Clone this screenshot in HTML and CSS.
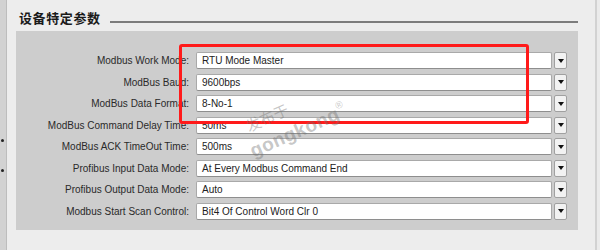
FILE: index.html
```html
<!DOCTYPE html>
<html lang="zh-CN">
<head>
    <meta charset="UTF-8">
    <title>设备特定参数</title>
    <link rel="stylesheet" href="styles.css">
</head>
<body>
    <div class="frame">
        <div class="side-strip">
            <span class="dot dot-1"></span>
            <span class="dot dot-2"></span>
        </div>

        <div class="content">
            <div class="section-title">
                <span class="title-text">设备特定参数</span>
                <span class="title-line"></span>
            </div>

            <div class="panel">
                <div class="param-row">
                    <label class="param-label">Modbus Work Mode:</label>
                    <div class="param-box">RTU Mode Master</div>
                    <div class="drop-btn"><span class="arrow"></span></div>
                </div>
                <div class="param-row">
                    <label class="param-label">ModBus Baud:</label>
                    <div class="param-box">9600bps</div>
                    <div class="drop-btn"><span class="arrow"></span></div>
                </div>
                <div class="param-row">
                    <label class="param-label">ModBus Data Format:</label>
                    <div class="param-box">8-No-1</div>
                    <div class="drop-btn"><span class="arrow"></span></div>
                </div>
                <div class="param-row">
                    <label class="param-label">ModBus Command Delay Time:</label>
                    <div class="param-box">50ms</div>
                    <div class="drop-btn"><span class="arrow"></span></div>
                </div>
                <div class="param-row">
                    <label class="param-label">ModBus ACK TimeOut Time:</label>
                    <div class="param-box">500ms</div>
                    <div class="drop-btn"><span class="arrow"></span></div>
                </div>
                <div class="param-row">
                    <label class="param-label">Profibus Input Data Mode:</label>
                    <div class="param-box">At Every Modbus Command End</div>
                    <div class="drop-btn"><span class="arrow"></span></div>
                </div>
                <div class="param-row">
                    <label class="param-label">Profibus Output Data Mode:</label>
                    <div class="param-box">Auto</div>
                    <div class="drop-btn"><span class="arrow"></span></div>
                </div>
                <div class="param-row">
                    <label class="param-label">Modbus Start Scan Control:</label>
                    <div class="param-box">Bit4 Of Control Word Clr 0</div>
                    <div class="drop-btn"><span class="arrow"></span></div>
                </div>

                <!-- highlight box drawn over the first three rows -->
                <div class="highlight"></div>
            </div>
        </div>
    </div>

    <div class="watermark">
        <span class="wm-cn">发布于</span>
        <span class="wm-en">gongkong<sup>®</sup></span>
    </div>
</body>
</html>
```

FILE: styles.css
```css
* {
    margin: 0;
    padding: 0;
    box-sizing: border-box;
}

body {
    width: 600px;
    height: 250px;
    overflow: hidden;
    background-color: #ebebeb;
    font-family: 'Liberation Sans', Arial, sans-serif;
    position: relative;
}

.frame {
    display: flex;
    height: 250px;
}

.side-strip {
    width: 7px;
    background-color: #d2d2d2;
    border-right: 1px solid #bdbdbd;
    position: relative;
}

.dot {
    position: absolute;
    left: 1px;
    width: 3px;
    height: 3px;
    border-radius: 50%;
    background-color: #222;
}

.dot-1 {
    top: 139px;
}

.dot-2 {
    top: 169px;
}

.content {
    flex: 1;
    padding: 0 17px 0 9px;
    border-right: 2px solid #d2d2d2;
    margin-right: 3px;
    background-color: #ededed;
}

.section-title {
    height: 31px;
    display: flex;
    align-items: flex-start;
    padding-left: 3px;
}

.title-text {
    font-family: 'Noto Sans CJK SC', sans-serif;
    font-weight: bold;
    font-size: 13px;
    letter-spacing: 0.6px;
    color: #1a1a1a;
    line-height: 14px;
    margin-top: 11px;
}

.title-line {
    flex: 1;
    height: 2px;
    background-color: #7c7c7c;
    margin-top: 21px;
    margin-left: 9px;
}

.panel {
    position: relative;
    height: 199px;
    background-color: #cdcdcd;
    padding: 21px 11px 0 0;
    display: flex;
    flex-direction: column;
    gap: 4.5px;
}

.param-row {
    display: flex;
    align-items: center;
    height: 17px;
}

.param-label {
    width: 173px;
    text-align: right;
    font-size: 10px;
    color: #2a2a2a;
}

.param-box {
    flex: 1;
    height: 17px;
    margin-left: 7px;
    background-color: #fff;
    border: 1px solid #a9a9a9;
    border-bottom-color: #8e8e8e;
    border-radius: 2px;
    font-size: 10px;
    color: #222;
    line-height: 15px;
    padding-left: 5px;
}

.drop-btn {
    width: 13px;
    height: 17px;
    margin-left: 2px;
    background-color: #f2f2f2;
    border: 1px solid #a0a0a0;
    border-radius: 2px;
    display: flex;
    align-items: center;
    justify-content: center;
}

.arrow {
    width: 0;
    height: 0;
    border-left: 3px solid transparent;
    border-right: 3px solid transparent;
    border-top: 4px solid #111;
}

.highlight {
    position: absolute;
    left: 163px;
    top: 13px;
    width: 350px;
    height: 80px;
    border: 3px solid #ff1a1a;
    border-radius: 3px;
}

.watermark {
    position: absolute;
    left: 242px;
    top: 99px;
    transform: rotate(-24deg);
    transform-origin: center;
    color: rgba(110, 110, 110, 0.4);
    display: flex;
    flex-direction: column;
    align-items: flex-start;
    pointer-events: none;
}

.wm-cn {
    font-family: 'Noto Sans CJK SC', sans-serif;
    font-size: 15px;
    line-height: 16px;
    margin-left: 6px;
}

.wm-en {
    font-family: 'Liberation Sans', Arial, sans-serif;
    font-weight: bold;
    font-size: 19px;
    line-height: 20px;
    letter-spacing: 0.5px;
}

.wm-en sup {
    font-size: 10px;
    font-weight: normal;
    vertical-align: 10px;
}
```
